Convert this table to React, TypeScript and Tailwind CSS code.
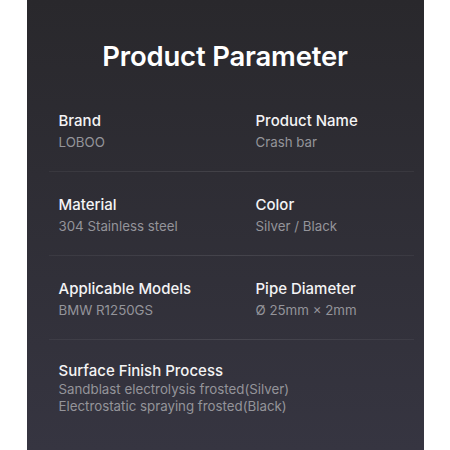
const rows: { label: string; value: string }[][] = [
  [
    { label: "Brand", value: "LOBOO" },
    { label: "Product Name", value: "Crash bar" },
  ],
  [
    { label: "Material", value: "304 Stainless steel" },
    { label: "Color", value: "Silver / Black" },
  ],
  [
    { label: "Applicable Models", value: "BMW R1250GS" },
    { label: "Pipe Diameter", value: "Ø 25mm × 2mm" },
  ],
];

function Divider() {
  return (
    <div className="ml-[22px] mr-[10px] h-px bg-gradient-to-r from-white/5 via-white/10 to-white/5" />
  );
}

export default function App() {
  return (
    <div className="flex min-h-screen justify-center bg-white font-['Inter',sans-serif]">
      <div className="h-[450px] w-[397px] bg-gradient-to-b from-[#29282c] to-[#363541]">
        <h1 className="mt-[40px] text-center text-[27.5px] font-semibold leading-[32px] tracking-[-0.2px] text-white">
          Product Parameter
        </h1>

        <div className="mt-[16px]">
          {rows.map((row, i) => (
            <div key={i}>
              <div className="grid grid-cols-[197px_1fr] pl-[32px] pt-[23px] pb-[19px]">
                {row.map((item) => (
                  <div key={item.label}>
                    <p className="text-[15px] font-medium leading-[20px] text-[#f4f4f5]">
                      {item.label}
                    </p>
                    <p className="mt-[1px] text-[13.3px] leading-[20px] text-[#94949a]">
                      {item.value}
                    </p>
                  </div>
                ))}
              </div>
              <Divider />
            </div>
          ))}

          <div className="pl-[32px] pt-[21px]">
            <p className="text-[15px] font-medium leading-[20px] text-[#f4f4f5]">
              Surface Finish Process
            </p>
            <p className="text-[13.3px] leading-[17px] text-[#94949a]">
              Sandblast electrolysis frosted(Silver)
              <br />
              Electrostatic spraying frosted(Black)
            </p>
          </div>
        </div>
      </div>
    </div>
  );
}
